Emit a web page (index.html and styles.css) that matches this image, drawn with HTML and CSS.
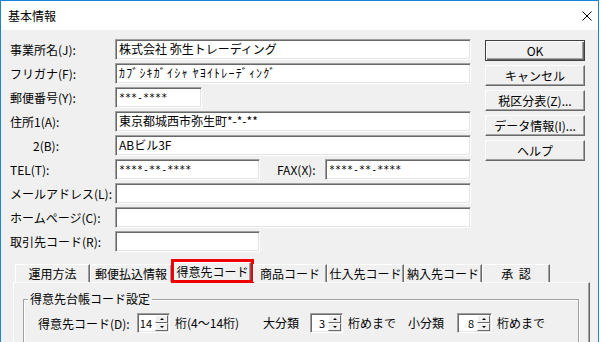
FILE: index.html
```html
<!DOCTYPE html>
<html lang="ja">
  <head>
    <meta charset="UTF-8"/>
    <title>基本情報</title>
    <link rel="stylesheet" href="styles.css">
  </head>
  <body>
    <div class="dialog">
      <div class="titleBar">
        <p class="titleBar_text">基本情報</p>
        <svg class="titleBar_close" width="10" height="10" viewBox="0 0 10 10">
          <path d="M0.5 0.5L9.5 9.5M9.5 0.5L0.5 9.5" stroke="#000" stroke-width="1"/>
        </svg>
      </div>
      <div class="client">
        <div class="topArea">
          <div class="form">
            <p class="form_label">事業所名(J):</p>
            <div class="textBox">株式会社 弥生トレーディング</div>

            <p class="form_label">フリガナ(F):</p>
            <div class="textBox textBox_kana">ｶﾌﾞｼｷｶﾞｲｼｬ ﾔﾖｲﾄﾚｰﾃﾞｨﾝｸﾞ</div>

            <p class="form_label">郵便番号(Y):</p>
            <div class="textBox textBox_postal textBox_masked">***-****</div>

            <p class="form_label">住所1(A):</p>
            <div class="textBox">東京都城西市弥生町*-*-**</div>

            <p class="form_label form_label_indent">2(B):</p>
            <div class="textBox">ABビル3F</div>

            <p class="form_label">TEL(T):</p>
            <div class="phoneRow">
              <div class="textBox textBox_short textBox_masked">****-**-****</div>
              <p class="phoneRow_label">FAX(X):</p>
              <div class="textBox textBox_fill textBox_masked">****-**-****</div>
            </div>

            <p class="form_label">メールアドレス(L):</p>
            <div class="textBox"></div>

            <p class="form_label">ホームページ(C):</p>
            <div class="textBox"></div>

            <p class="form_label">取引先コード(R):</p>
            <div class="textBox textBox_short"></div>
          </div>

          <div class="buttonColumn">
            <div class="button button_default">OK</div>
            <div class="button">キャンセル</div>
            <div class="button">税区分表(Z)...</div>
            <div class="button">データ情報(I)...</div>
            <div class="button">ヘルプ</div>
          </div>
        </div>

        <div class="tabStrip">
          <div class="tab tab_w75">運用方法</div>
          <div class="tab tab_w82">郵便払込情報</div>
          <div class="tab tab_selected">得意先コード</div>
          <div class="tab tab_w74">商品コード</div>
          <div class="tab tab_w77">仕入先コード</div>
          <div class="tab tab_w78">納入先コード</div>
          <div class="tab tab_w68">承&nbsp;&nbsp;認</div>
        </div>
        <div class="tabPanel">
          <fieldset class="groupBox">
            <legend class="groupBox_title">得意先台帳コード設定</legend>
            <div class="codeRow">
              <span class="codeRow_label">得意先コード(D):</span>
              <div class="spinner">
                <span class="spinner_value">14</span>
                <div class="spinner_buttons">
                  <div class="spinner_btn"><span class="arrow_up"></span></div>
                  <div class="spinner_btn"><span class="arrow_down"></span></div>
                </div>
              </div>
              <span class="codeRow_text codeRow_range">桁(4〜14桁)</span>
              <span class="codeRow_text codeRow_major">大分類</span>
              <div class="spinner">
                <span class="spinner_value">3</span>
                <div class="spinner_buttons">
                  <div class="spinner_btn"><span class="arrow_up"></span></div>
                  <div class="spinner_btn"><span class="arrow_down"></span></div>
                </div>
              </div>
              <span class="codeRow_text codeRow_until">桁めまで</span>
              <span class="codeRow_text codeRow_minor">小分類</span>
              <div class="spinner spinner_wide">
                <span class="spinner_value">8</span>
                <div class="spinner_buttons">
                  <div class="spinner_btn"><span class="arrow_up"></span></div>
                  <div class="spinner_btn"><span class="arrow_down"></span></div>
                </div>
              </div>
              <span class="codeRow_text codeRow_untilLast">桁めまで</span>
            </div>
          </fieldset>
        </div>
      </div>
    </div>
  </body>
</html>
```

FILE: styles.css
```css
* {
  box-sizing: border-box;
}
html, body {
  margin: 0;
  padding: 0;
  width: 602px;
  height: 342px;
  overflow: hidden;
  background-color: rgb(255, 255, 255);
}
body {
  font-family: "Noto Sans CJK JP", "Liberation Sans", sans-serif;
  font-size: 12px;
  color: rgb(0, 0, 0);
}
p {
  margin: 0;
}

.dialog {
  width: 599px;
  height: 342px;
  border: 1px solid rgb(24, 131, 215);
  border-bottom: none;
  background-color: rgb(240, 240, 240);
  overflow: hidden;
}

/* title bar */
.titleBar {
  height: 29px;
  background-color: rgb(255, 255, 255);
  display: flex;
  align-items: center;
  justify-content: space-between;
  padding: 0 6px 0 7px;
}
  .titleBar_text {
    line-height: 29px;
  }
  .titleBar_close {
    display: block;
    margin-top: 1px;
  }

/* top area */
.topArea {
  display: flex;
  padding: 9px 0 0 9px;
}
  .form {
    display: grid;
    grid-template-columns: 105px 356px;
    grid-auto-rows: 21px;
    row-gap: 3px;
  }
    .form_label {
      align-self: center;
      line-height: 16px;
      white-space: nowrap;
    }
    .form_label_indent {
      padding-left: 23px;
    }

  .textBox {
    height: 21px;
    background-color: rgb(255, 255, 255);
    border: 1px solid;
    border-color: rgb(160, 160, 160) rgb(255, 255, 255) rgb(255, 255, 255) rgb(160, 160, 160);
    box-shadow: inset 1px 1px rgb(105, 105, 105), inset -1px -1px rgb(227, 227, 227);
    padding: 0 3px 0 3px;
    line-height: 18px;
    white-space: nowrap;
    overflow: hidden;
  }
  .textBox_kana {
    letter-spacing: 1.2px;
  }
  .textBox_postal {
    width: 87px;
  }
  .textBox_short {
    width: 145px;
  }
  .textBox_fill {
    flex: 1;
  }
  .textBox_masked {
    font-family: "DejaVu Sans Mono", monospace;
    font-size: 10px;
    line-height: 19px;
  }

  .phoneRow {
    display: flex;
    align-items: center;
  }
    .phoneRow_label {
      width: 48px;
      margin-left: 17px;
      line-height: 16px;
    }

  .buttonColumn {
    width: 100px;
    margin-left: 14px;
    padding-top: 1px;
    display: flex;
    flex-direction: column;
    gap: 4px;
  }
    .button {
      height: 21px;
      border: 1px solid;
      border-color: rgb(255, 255, 255) rgb(105, 105, 105) rgb(105, 105, 105) rgb(255, 255, 255);
      box-shadow: inset -1px -1px rgb(160, 160, 160);
      display: flex;
      align-items: center;
      justify-content: center;
      line-height: 16px;
    }
    .button_default {
      border: 1px solid rgb(64, 64, 64);
      box-shadow: inset 1px 1px rgb(255, 255, 255), inset -1px -1px rgb(105, 105, 105), inset -2px -2px rgb(160, 160, 160);
    }

/* tabs */
.tabStrip {
  position: relative;
  z-index: 1;
  display: flex;
  align-items: flex-end;
  height: 20px;
  margin: 10px 0 0 14px;
}
  .tab {
    height: 18px;
    border-top: 1px solid rgb(255, 255, 255);
    border-left: 1px solid rgb(255, 255, 255);
    border-right: 1px solid rgb(105, 105, 105);
    box-shadow: inset -1px 0 rgb(160, 160, 160);
    display: flex;
    align-items: center;
    justify-content: center;
    line-height: 16px;
    white-space: nowrap;
  }
  .tab_w75 { width: 75px; }
  .tab_w82 { width: 82px; }
  .tab_w74 { width: 74px; }
  .tab_w77 { width: 77px; }
  .tab_w78 { width: 78px; }
  .tab_w68 { width: 68px; }
  .tab_selected {
    align-self: flex-start;
    width: 77px;
    margin: 0 2px;
    background-color: rgb(240, 240, 240);
    outline: 3px solid rgb(238, 0, 0);
  }

.tabPanel {
  width: 577px;
  height: 80px;
  margin-left: 12px;
  border-top: 1px solid rgb(255, 255, 255);
  border-left: 1px solid rgb(255, 255, 255);
  border-right: 1px solid rgb(105, 105, 105);
  box-shadow: inset -1px 0 rgb(160, 160, 160);
  padding: 9px 10px 0 9px;
}
  .groupBox {
    margin: 0;
    height: 70px;
    padding: 0 0 0 4px;
    border: 1px solid rgb(160, 160, 160);
    box-shadow: inset 1px 1px rgb(255, 255, 255), 1px 1px rgb(255, 255, 255);
  }
    .groupBox_title {
      padding: 0 2px;
      line-height: 14px;
      background-color: rgb(240, 240, 240);
    }

  .codeRow {
    display: flex;
    align-items: center;
    height: 20px;
    margin: 7px 0 0 10px;
    white-space: nowrap;
  }
    .codeRow_label {
      width: 99px;
    }
    .codeRow_text {
      line-height: 16px;
    }
    .codeRow_range {
      width: 88px;
      margin-left: 5px;
    }
    .codeRow_major {
      width: 47px;
    }
    .codeRow_until {
      width: 60px;
      margin-left: 5px;
    }
    .codeRow_minor {
      width: 49px;
    }
    .codeRow_untilLast {
      margin-left: 5px;
    }

  .spinner {
    width: 33px;
    height: 20px;
    display: flex;
    align-items: stretch;
    background-color: rgb(255, 255, 255);
    border: 1px solid;
    border-color: rgb(160, 160, 160) rgb(255, 255, 255) rgb(255, 255, 255) rgb(160, 160, 160);
    box-shadow: inset 1px 1px rgb(105, 105, 105), inset -1px -1px rgb(227, 227, 227);
    padding: 1px;
  }
  .spinner_wide {
    width: 35px;
  }
    .spinner_value {
      flex: 1;
      text-align: right;
      padding-right: 3px;
      line-height: 16px;
      font-size: 11px;
    }
    .spinner_buttons {
      width: 13px;
      display: flex;
      flex-direction: column;
    }
      .spinner_btn {
        flex: 1;
        background-color: rgb(240, 240, 240);
        border: 1px solid;
        border-color: rgb(255, 255, 255) rgb(105, 105, 105) rgb(105, 105, 105) rgb(255, 255, 255);
        display: flex;
        align-items: center;
        justify-content: center;
      }
        .arrow_up {
          width: 0;
          height: 0;
          border-left: 2px solid transparent;
          border-right: 2px solid transparent;
          border-bottom: 2px solid rgb(0, 0, 0);
        }
        .arrow_down {
          width: 0;
          height: 0;
          border-left: 2px solid transparent;
          border-right: 2px solid transparent;
          border-top: 2px solid rgb(0, 0, 0);
        }
```
